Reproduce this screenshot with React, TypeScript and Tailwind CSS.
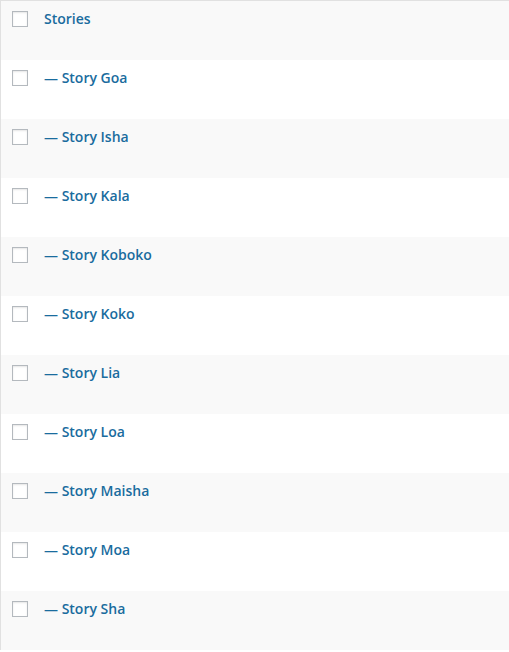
const items = [
  "Stories",
  "— Story Goa",
  "— Story Isha",
  "— Story Kala",
  "— Story Koboko",
  "— Story Koko",
  "— Story Lia",
  "— Story Loa",
  "— Story Maisha",
  "— Story Moa",
  "— Story Sha",
]

export default function App() {
  return (
    <div className="min-h-screen bg-white" style={{ fontFamily: '"Open Sans", "Noto Sans", sans-serif' }}>
      <div className="border-t border-l border-[#e1e1e1]">
        {items.map((name, i) => (
          <div
            key={name}
            className={`flex items-start h-[59px] ${i % 2 === 0 ? "bg-[#f9f9f9]" : "bg-white"}`}
          >
            <span className="mt-[10px] ml-[11px] w-4 h-4 border border-[#b4b9be] bg-white shadow-[inset_0_1px_2px_rgba(0,0,0,0.1)]" />
            <a href="#" className="ml-[16px] mt-[8px] text-[14px] leading-[20px] font-semibold text-[#1a6c9e]">
              {name}
            </a>
          </div>
        ))}
      </div>
    </div>
  )
}
